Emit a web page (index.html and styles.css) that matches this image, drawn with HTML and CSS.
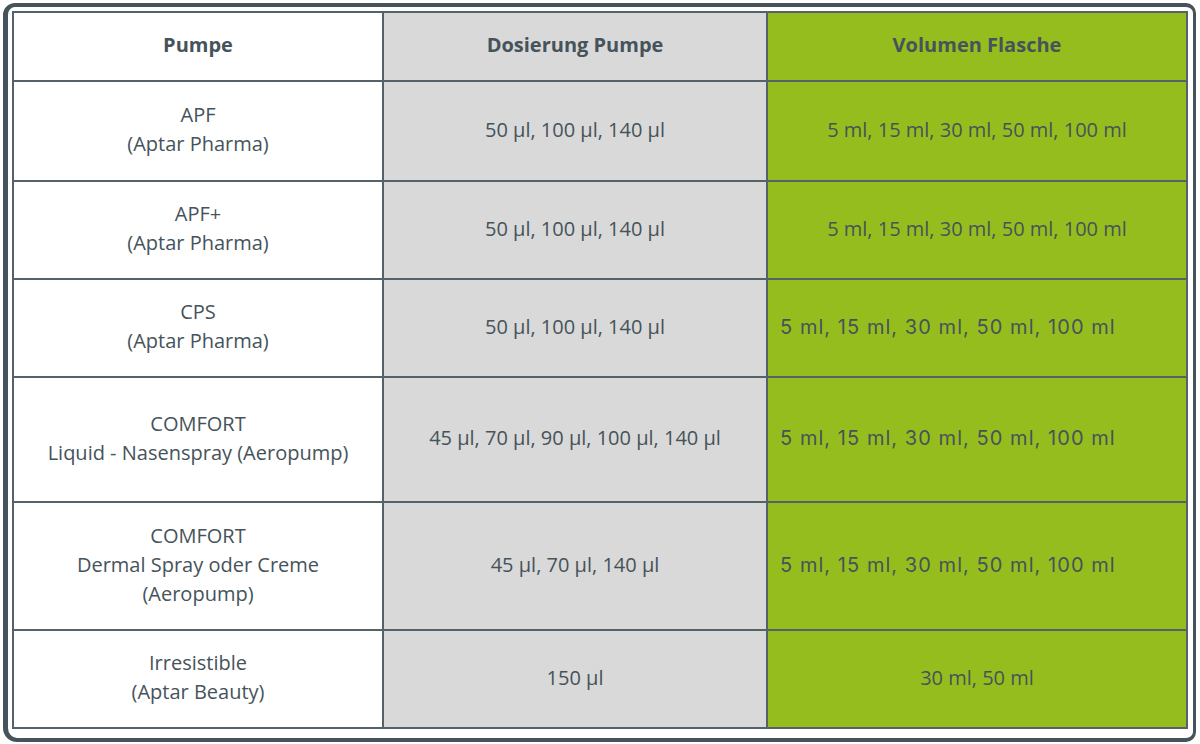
FILE: index.html
```html
<!DOCTYPE html>
<html lang="de">
<head>
<meta charset="utf-8">
<title>Pumpen</title>
<link rel="stylesheet" href="styles.css">
</head>
<body>
<div class="frame">
  <table class="pumps">
    <thead>
      <tr class="h-head">
        <th class="c1">Pumpe</th>
        <th class="c2">Dosierung Pumpe</th>
        <th class="c3">Volumen Flasche</th>
      </tr>
    </thead>
    <tbody>
      <tr class="h-100">
        <td class="c1">APF<br>(Aptar Pharma)</td>
        <td class="c2">50 µl, 100 µl, 140 µl</td>
        <td class="c3">5 ml, 15 ml, 30 ml, 50 ml, 100 ml</td>
      </tr>
      <tr class="h-98">
        <td class="c1">APF+<br>(Aptar Pharma)</td>
        <td class="c2">50 µl, 100 µl, 140 µl</td>
        <td class="c3">5 ml, 15 ml, 30 ml, 50 ml, 100 ml</td>
      </tr>
      <tr class="h-98">
        <td class="c1">CPS<br>(Aptar Pharma)</td>
        <td class="c2">50 µl, 100 µl, 140 µl</td>
        <td class="c3 alt">5 ml, 15 ml, 30 ml, 50 ml, 100 ml</td>
      </tr>
      <tr class="h-125">
        <td class="c1">COMFORT<br>Liquid - Nasenspray (Aeropump)</td>
        <td class="c2">45 µl, 70 µl, 90 µl, 100 µl, 140 µl</td>
        <td class="c3 alt">5 ml, 15 ml, 30 ml, 50 ml, 100 ml</td>
      </tr>
      <tr class="h-128">
        <td class="c1">COMFORT<br>Dermal Spray oder Creme<br>(Aeropump)</td>
        <td class="c2">45 µl, 70 µl, 140 µl</td>
        <td class="c3 alt">5 ml, 15 ml, 30 ml, 50 ml, 100 ml</td>
      </tr>
      <tr class="h-98">
        <td class="c1">Irresistible<br>(Aptar Beauty)</td>
        <td class="c2">150 µl</td>
        <td class="c3">30 ml, 50 ml</td>
      </tr>
    </tbody>
  </table>
</div>
</body>
</html>
```

FILE: styles.css
```css
html, body {
  margin: 0;
  padding: 0;
  background: #ffffff;
}

body {
  width: 1200px;
  height: 744px;
  overflow: hidden;
  font-family: "Open Sans", "Noto Sans", sans-serif;
  color: #46535a;
}

.frame {
  box-sizing: border-box;
  margin: 3px 4px 0 3px;
  width: 1193px;
  height: 739px;
  border-style: solid;
  border-color: #46535a;
  border-width: 4px 3px 4px 5px;
  border-radius: 12px 10px 10px 14px;
  padding: 4px 5px 0 4px;
}

.pumps {
  border-collapse: collapse;
  width: 1176px;
  table-layout: fixed;
}

.pumps th,
.pumps td {
  border: 2px solid #56626a;
  text-align: center;
  vertical-align: middle;
  padding: 0 0 4px 0;
  font-size: 20px;
  line-height: 29px;
  letter-spacing: 0;
}

.pumps th {
  font-weight: 700;
  font-size: 20px;
}

.c1 { width: 368px; background: #ffffff; }
.c2 { width: 382px; background: #d9d9d9; }
.c3 { background: #96bd1e; }

.pumps td.alt {
  text-align: left;
  padding: 0 0 2px 12px;
  font-family: "Inter", "Lato", sans-serif;
  font-size: 20px;
  letter-spacing: 1.05px;
}

.h-head { height: 69px; }
.h-100 { height: 100px; }
.h-98 { height: 98px; }
.h-125 { height: 125px; }
.h-128 { height: 128px; }
```
